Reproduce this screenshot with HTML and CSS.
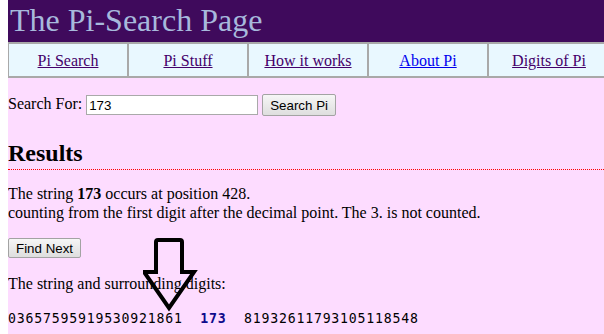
FILE: index.html
```html
<!DOCTYPE html>
<html>
	<head>
		<meta charset="UTF-8">
		<title>The Pi-Search Page</title>
		<link rel="stylesheet" href="styles.css">
	</head>
	<body>
		<div class="page">
			<!-- 页头 -->
			<div class="header">The Pi-Search Page</div>
			<!-- 导航 -->
			<div class="nav">
				<div class="nav-cell"><a class="visited" href="#">Pi Search</a></div>
				<div class="nav-cell"><a class="visited" href="#">Pi Stuff</a></div>
				<div class="nav-cell"><a class="visited" href="#">How it works</a></div>
				<div class="nav-cell"><a href="#">About Pi</a></div>
				<div class="nav-cell"><a class="visited" href="#">Digits of Pi</a></div>
			</div>

			<div class="content">
				<form class="search">
					Search For: <input class="search-box" type="text" value="173"> <button class="btn" type="button">Search Pi</button>
				</form>

				<h2 class="results">Results</h2>

				<p class="found">The string <b>173</b> occurs at position 428.<br>
				counting from the first digit after the decimal point. The 3. is not counted.</p>

				<p class="next"><button class="btn btn-small" type="button">Find Next</button></p>

				<p>The string and surrounding digits:</p>

				<p class="digits">03657595919530921861&nbsp;&nbsp;<b>173</b>&nbsp;&nbsp;81932611793105118548</p>

				<!-- 箭头 -->
				<svg class="arrow" width="60" height="76" viewBox="0 0 60 76">
					<path d="M15 2 H37 Q39 2 39 4 V34 H51 L26 70 L1 34 H13 V4 Q13 2 15 2 Z" fill="none" stroke="#000" stroke-width="4" stroke-linejoin="miter"/>
				</svg>
			</div>
		</div>
	</body>
</html>
```

FILE: styles.css
```css
html, body{
	overflow: hidden;
}

body{
	margin: 0 0 0 8px;
	background-color: #fff;
	font-family: "Liberation Serif", "Times New Roman", serif;
	font-size: 16px;
}

.page{
	width: 600px;
	min-height: 100vh;
	background-color: #fddcff;
}

/*页头*/
.header{
	height: 42px;
	line-height: 41px;
	padding-left: 2px;
	background-color: #3f0a5c;
	color: #a7b9dc;
	font-size: 32px;
}

/*导航*/
.nav{
	display: flex;
	height: 32px;
	border-top: 2px solid #a9a9a9;
	border-bottom: 2px solid #a9a9a9;
	border-left: 1px solid #a9a9a9;
	background-color: #e9f8ff;
}

.nav-cell{
	flex: 0 0 120px;
	box-sizing: border-box;
	border-right: 2px solid #a9a9a9;
	text-align: center;
	line-height: 33px;
}

.nav-cell:last-child{
	border-right: none;
}

.nav a{
	color: #0000ee;
}

.nav a.visited{
	color: #44006a;
}

.content{
	position: relative;
}

.content p{
	margin: 16px 0;
	line-height: 19px;
}

.search{
	margin: 0;
	padding-top: 15px;
	line-height: 22px;
}

.search-box{
	width: 166px;
	height: 16px;
	padding: 1px 2px;
	border: 1px solid #a9a9a9;
	font-family: "Liberation Sans", Arial, sans-serif;
	font-size: 13.33px;
	color: #000;
	vertical-align: middle;
}

.btn{
	height: 22px;
	padding: 0 7px;
	border: 1px solid #a3a3a3;
	border-radius: 2px;
	background: linear-gradient(#f6f6f6, #dedede);
	font-family: "Liberation Sans", Arial, sans-serif;
	font-size: 13.33px;
	color: #000;
	vertical-align: middle;
}

.btn-small{
	height: 20px;
	vertical-align: top;
}

.results{
	margin: 23px 0 0;
	padding-bottom: 2px;
	font-size: 24px;
	line-height: 28px;
	border-bottom: 1px dotted #ff0000;
}

.content .found{
	margin-top: 14px;
}

.content .next{
	margin: 15px 0 16px;
	height: 20px;
}

.digits{
	font-family: "DejaVu Sans Mono", "Liberation Mono", monospace;
	font-size: 13.2px;
	letter-spacing: 0.8px;
}

.digits b{
	color: #0f0a8c;
}

/*箭头压在文字上面*/
.arrow{
	position: absolute;
	left: 135px;
	top: 160px;
}
```
